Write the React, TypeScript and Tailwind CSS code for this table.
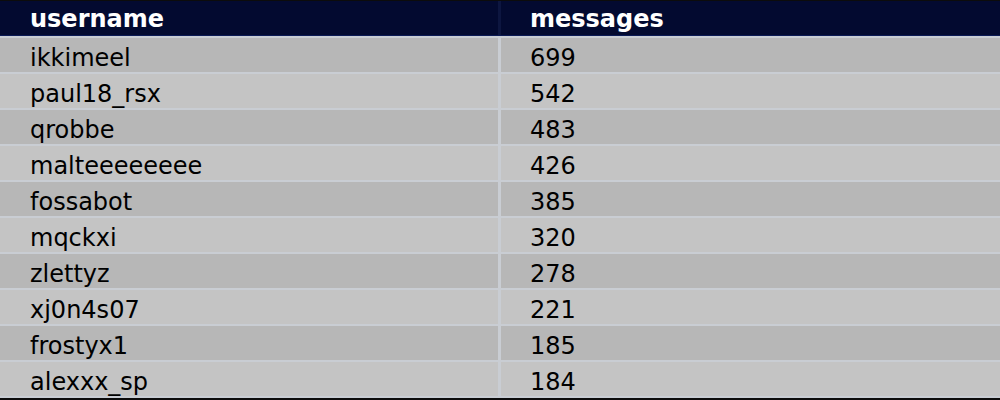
const rows = [
  { user: 'ikkimeel', count: 699 },
  { user: 'paul18_rsx', count: 542 },
  { user: 'qrobbe', count: 483 },
  { user: 'malteeeeeeee', count: 426 },
  { user: 'fossabot', count: 385 },
  { user: 'mqckxi', count: 320 },
  { user: 'zlettyz', count: 278 },
  { user: 'xj0n4s07', count: 221 },
  { user: 'frostyx1', count: 185 },
  { user: 'alexxx_sp', count: 184 },
];

const App = () => {
  return (
    <div className="w-[1000px] h-[400px] overflow-hidden bg-[#0c0c0c] pt-px font-['DejaVu_Sans',sans-serif] text-[24px] leading-none">
      <div className="flex flex-col gap-[2px] pb-[2px] bg-[#c9cdd3]">
        <div className="flex h-[35px] gap-[3px] bg-[#0d1640] border-b border-[#0b1a55]">
          <div className="flex-1 flex items-center pt-[2px] pl-[30px] bg-[#030a30] font-bold text-white">username</div>
          <div className="w-[499px] flex items-center pt-[2px] pl-[29px] bg-[#030a30] font-bold text-white">messages</div>
        </div>
        {rows.map((r, i) => (
          <div key={r.user} className="flex h-[34px] gap-[3px]">
            <div
              className={`flex-1 flex items-center pt-[5px] pl-[30px] text-black ${i % 2 === 0 ? 'bg-[#b7b7b7]' : 'bg-[#c4c4c4]'}`}
            >
              {r.user}
            </div>
            <div
              className={`w-[499px] flex items-center pt-[5px] pl-[29px] text-black ${i % 2 === 0 ? 'bg-[#b7b7b7]' : 'bg-[#c4c4c4]'}`}
            >
              {r.count}
            </div>
          </div>
        ))}
      </div>
    </div>
  );
};

export default App;
